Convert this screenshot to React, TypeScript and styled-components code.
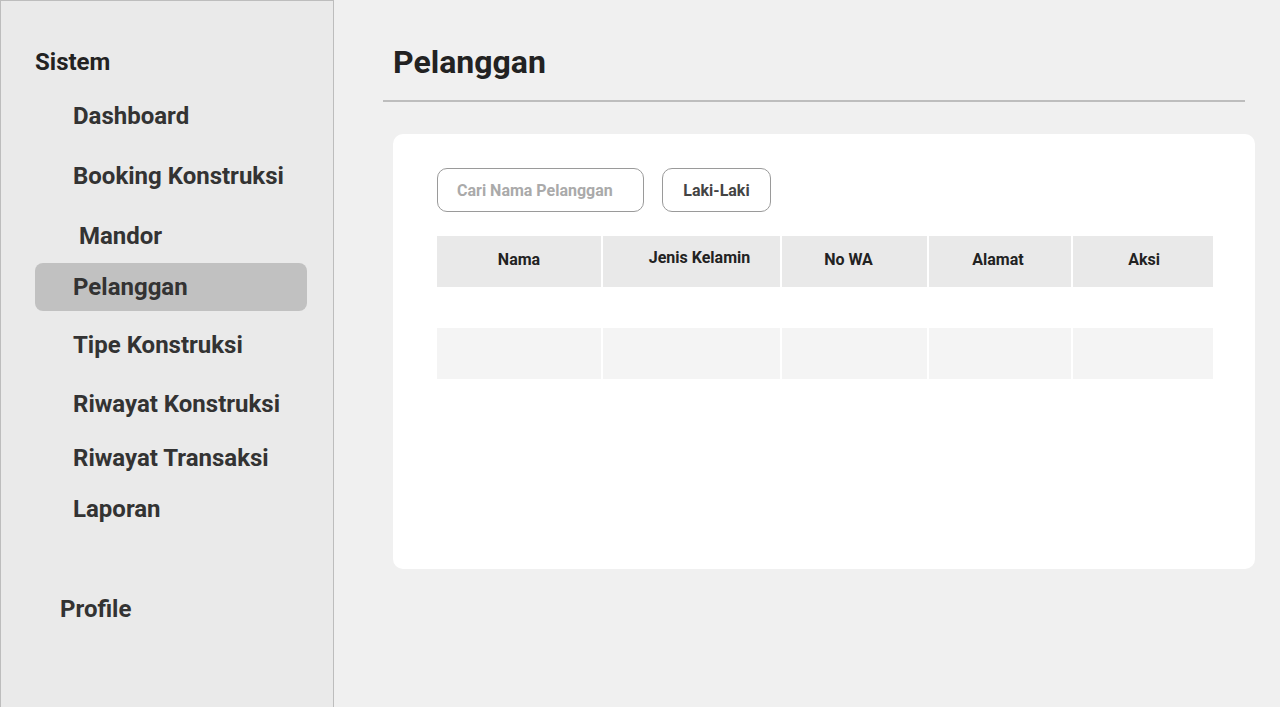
import React from "react";
import styled, { createGlobalStyle } from "styled-components";

const GlobalStyle = createGlobalStyle`
  * { box-sizing: border-box; }
  html, body { margin: 0; padding: 0; }
  body {
    background: #f0f0f0;
    font-family: Roboto, "Liberation Sans", sans-serif;
    color: #222;
  }
`;

type MenuItem = { label: string; top: number; indent: number; active?: boolean };

const menu: MenuItem[] = [
  { label: "Dashboard", top: 26, indent: 38 },
  { label: "Booking Konstruksi", top: 32, indent: 38 },
  { label: "Mandor", top: 32, indent: 44 },
  { label: "Pelanggan", top: 13, indent: 38, active: true },
  { label: "Tipe Konstruksi", top: 20, indent: 38 },
  { label: "Riwayat Konstruksi", top: 31, indent: 38 },
  { label: "Riwayat Transaksi", top: 26, indent: 38 },
  { label: "Laporan", top: 23, indent: 38 },
];

// shift: horizontal offset of the label from the cell centre, lift: extra upward nudge
const columns = [
  { label: "Nama", shift: 0, lift: 0 },
  { label: "Jenis Kelamin", shift: 8, lift: 4 },
  { label: "No WA", shift: -6, lift: 0 },
  { label: "Alamat", shift: -2, lift: 0 },
  { label: "Aksi", shift: 1, lift: 0 },
];

const App = () => {
  return (
    <Layout>
      <GlobalStyle />
      <Sidebar>
        <SectionTitle>Sistem</SectionTitle>
        {menu.map((item) => (
          <NavItem key={item.label} $top={item.top} $indent={item.indent} $active={item.active}>
            {item.label}
          </NavItem>
        ))}
        <NavItem $top={72} $indent={25}>
          Profile
        </NavItem>
      </Sidebar>
      <Main>
        <PageHeader>
          <PageTitle>Pelanggan</PageTitle>
        </PageHeader>
        <Card>
          <Filters>
            <SearchInput placeholder="Cari Nama Pelanggan" />
            <FilterButton>Laki-Laki</FilterButton>
          </Filters>
          <Table>
            {columns.map((c) => (
              <HeadCell key={c.label} $shift={c.shift} $lift={c.lift}>
                {c.label}
              </HeadCell>
            ))}
            {columns.map((c) => (
              <BodyCell key={"a" + c.label} $striped={false} />
            ))}
            {columns.map((c) => (
              <BodyCell key={"b" + c.label} $striped />
            ))}
          </Table>
        </Card>
      </Main>
    </Layout>
  );
};

export default App;

const Layout = styled.div`
  display: flex;
  min-height: 100vh;
`;

const Sidebar = styled.aside`
  width: 334px;
  flex-shrink: 0;
  min-height: 100vh;
  background: #eaeaea;
  border: 1px solid #bdbdbd;
  border-bottom: none;
  padding: 47px 26px 0 34px;
  display: flex;
  flex-direction: column;
`;

const SectionTitle = styled.div`
  font-size: 24px;
  line-height: 28px;
  font-weight: 700;
  color: #222;
`;

const NavItem = styled.div<{ $top: number; $indent: number; $active?: boolean }>`
  margin-top: ${(p) => p.$top}px;
  padding: ${(p) => (p.$active ? "10px" : "0")} 0 ${(p) => (p.$active ? "10px" : "0")}
    ${(p) => p.$indent}px;
  font-size: 24px;
  line-height: 28px;
  font-weight: 700;
  color: #333;
  border-radius: 8px;
  background: ${(p) => (p.$active ? "#c1c1c1" : "transparent")};
`;

const Main = styled.main`
  flex: 1;
  padding: 43px 25px 0 49px;
  display: flex;
  flex-direction: column;
`;

const PageHeader = styled.div`
  margin-right: 10px;
  padding: 0 0 19px 10px;
  border-bottom: 2px solid #bdbdbd;
`;

const PageTitle = styled.h1`
  margin: 0;
  font-size: 32px;
  line-height: 38px;
  font-weight: 700;
  color: #222;
`;

const Card = styled.section`
  margin: 32px 0 0 10px;
  height: 435px;
  background: #fff;
  border-radius: 10px;
  padding: 34px 42px 0 44px;
`;

const Filters = styled.div`
  display: flex;
  gap: 18px;
`;

const SearchInput = styled.input`
  width: 207px;
  height: 44px;
  border: 1px solid #9a9a9a;
  border-radius: 10px;
  padding: 0 19px;
  font-family: Roboto, "Liberation Sans", sans-serif;
  font-size: 16px;
  font-weight: 700;
  color: #333;
  background: #fff;
  outline: none;
  &::placeholder {
    color: #aaa;
  }
`;

const FilterButton = styled.button`
  width: 109px;
  height: 44px;
  padding: 0;
  border: 1px solid #9a9a9a;
  border-radius: 10px;
  background: #fff;
  font-family: Roboto, "Liberation Sans", sans-serif;
  font-size: 16px;
  font-weight: 700;
  color: #444;
`;

const Table = styled.div`
  margin-top: 24px;
  display: grid;
  grid-template-columns: 164px 177px 145px 142px 140px;
  grid-template-rows: 51px 41px 51px;
  column-gap: 2px;
`;

const HeadCell = styled.div<{ $shift: number; $lift: number }>`
  background: #e9e9e9;
  display: flex;
  align-items: center;
  justify-content: center;
  font-size: 16px;
  font-weight: 700;
  color: #222;
  padding-bottom: ${(p) => 4 + p.$lift}px;
  padding-left: ${(p) => Math.max(0, p.$shift * 2)}px;
  padding-right: ${(p) => Math.max(0, -p.$shift * 2)}px;
`;

const BodyCell = styled.div<{ $striped: boolean }>`
  background: ${(p) => (p.$striped ? "#f4f4f4" : "#fff")};
`;
